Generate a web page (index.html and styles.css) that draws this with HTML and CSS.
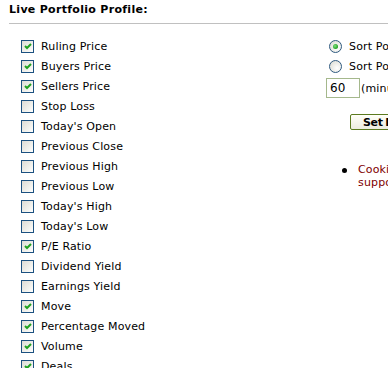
FILE: index.html
```html
<!DOCTYPE html>
<html>
  <head>
    <meta charset="UTF-8">
    <title>Live Portfolio Profile</title>
	<link rel="stylesheet" href="styles.css">
  </head>
  <body>

	<div id="mother">

	<h2 class="title">Live Portfolio Profile:</h2>

	<div class="panel">

		<div class="fields">
			<label class="row"><span class="box on"><svg viewBox="0 0 11 11"><polyline points="3,5 5,7 9,3"/></svg></span>Ruling Price</label>
			<label class="row"><span class="box on"><svg viewBox="0 0 11 11"><polyline points="3,5 5,7 9,3"/></svg></span>Buyers Price</label>
			<label class="row"><span class="box on"><svg viewBox="0 0 11 11"><polyline points="3,5 5,7 9,3"/></svg></span>Sellers Price</label>
			<label class="row"><span class="box"></span>Stop Loss</label>
			<label class="row"><span class="box"></span>Today's Open</label>
			<label class="row"><span class="box"></span>Previous Close</label>
			<label class="row"><span class="box"></span>Previous High</label>
			<label class="row"><span class="box"></span>Previous Low</label>
			<label class="row"><span class="box"></span>Today's High</label>
			<label class="row"><span class="box"></span>Today's Low</label>
			<label class="row"><span class="box on"><svg viewBox="0 0 11 11"><polyline points="3,5 5,7 9,3"/></svg></span>P/E Ratio</label>
			<label class="row"><span class="box"></span>Dividend Yield</label>
			<label class="row"><span class="box"></span>Earnings Yield</label>
			<label class="row"><span class="box on"><svg viewBox="0 0 11 11"><polyline points="3,5 5,7 9,3"/></svg></span>Move</label>
			<label class="row"><span class="box on"><svg viewBox="0 0 11 11"><polyline points="3,5 5,7 9,3"/></svg></span>Percentage Moved</label>
			<label class="row"><span class="box on"><svg viewBox="0 0 11 11"><polyline points="3,5 5,7 9,3"/></svg></span>Volume</label>
			<label class="row"><span class="box on"><svg viewBox="0 0 11 11"><polyline points="3,5 5,7 9,3"/></svg></span>Deals</label>
		</div>

		<div class="options">
			<label class="row"><span class="radio on"></span>Sort Portfolio by Share Code</label>
			<label class="row"><span class="radio"></span>Sort Portfolio by Entry Order</label>
			<div class="refresh">
				<span class="input">60</span>(minutes between refreshes)
			</div>
			<div class="actions">
				<button class="set-button">Set Profile</button>
			</div>
			<ul class="notes">
				<li>Cookies must be enabled for this to work, not<br>supported on shared computers.</li>
			</ul>
		</div>

	</div>

	</div>

  </body>
</html>
```

FILE: styles.css
```css
 * {
	box-sizing: border-box;
 }
 html, body {
	margin: 0px;
	padding: 0px;
	overflow: hidden;
	background-color: #ffffff;
	color: #000000;
	font-family: Verdana, "DejaVu Sans", sans-serif;
	font-size: 11px;
	letter-spacing: 0.15px;
 }
 #mother {
	width: 640px;
 }
 .title {
	margin: 0px 0px 0px 9px;
	padding: 2px 0px 6px 0px;
	font-size: 11px;
	line-height: 15px;
	font-weight: bold;
	letter-spacing: 0.3px;
	border-bottom: 1px solid #c0c0c0;
 }
 .panel {
	display: flex;
	padding-top: 12px;
 }
 .fields {
	width: 326px;
	padding-left: 21px;
 }
 .row {
	display: flex;
	align-items: center;
	height: 20px;
	white-space: nowrap;
 }
 .box {
	width: 13px;
	height: 13px;
	margin-right: 7px;
	border: 1px solid #1c5180;
	background: linear-gradient(135deg, #dcdcd5 0%, #f4f4f0 70%, #ffffff 100%);
	flex: none;
 }
 .box svg {
	display: block;
	width: 11px;
	height: 11px;
 }
 .box polyline {
	fill: none;
	stroke: #21a121;
	stroke-width: 2;
 }
 .radio {
	width: 13px;
	height: 13px;
	margin: 0px 7px 0px 3px;
	border: 1px solid #2f5a80;
	border-radius: 50%;
	background: radial-gradient(circle at 65% 65%, #ffffff 0%, #e8e8e2 60%, #d4d4cc 100%);
	flex: none;
	position: relative;
 }
 .radio.on::after {
	content: "";
	position: absolute;
	left: 3px;
	top: 3px;
	width: 5px;
	height: 5px;
	border-radius: 50%;
	background: radial-gradient(circle at 40% 40%, #7ee07e 0%, #21a121 70%);
 }
 .options {
	width: 314px;
 }
 .refresh {
	display: flex;
	align-items: center;
	margin-top: 2px;
	white-space: nowrap;
 }
 .input {
	width: 34px;
	height: 20px;
	margin-right: 1px;
	padding: 2px 3px;
	border: 1px solid #a5b88c;
	font-family: "DejaVu Sans", sans-serif;
	font-size: 12px;
	line-height: 14px;
 }
 .actions {
	margin-top: 16px;
	padding-left: 24px;
 }
 .set-button {
	height: 16px;
	padding: 0px 10px 0px 12px;
	border: 1px solid #5b7a1e;
	border-radius: 2px;
	background: linear-gradient(#fffff8, #ecebe0);
	font-family: Verdana, "DejaVu Sans", sans-serif;
	font-size: 11px;
	font-weight: bold;
	line-height: 13px;
	letter-spacing: -0.3px;
	word-spacing: -1px;
	color: #000000;
 }
 .notes {
	margin: 33px 0px 0px 0px;
	padding-left: 32px;
	color: #800000;
	line-height: 13px;
	list-style: none;
 }
 .notes li {
	position: relative;
 }
 .notes li::before {
	content: "";
	position: absolute;
	left: -16px;
	top: 5px;
	width: 5px;
	height: 5px;
	border-radius: 50%;
	background-color: #000000;
 }
```
